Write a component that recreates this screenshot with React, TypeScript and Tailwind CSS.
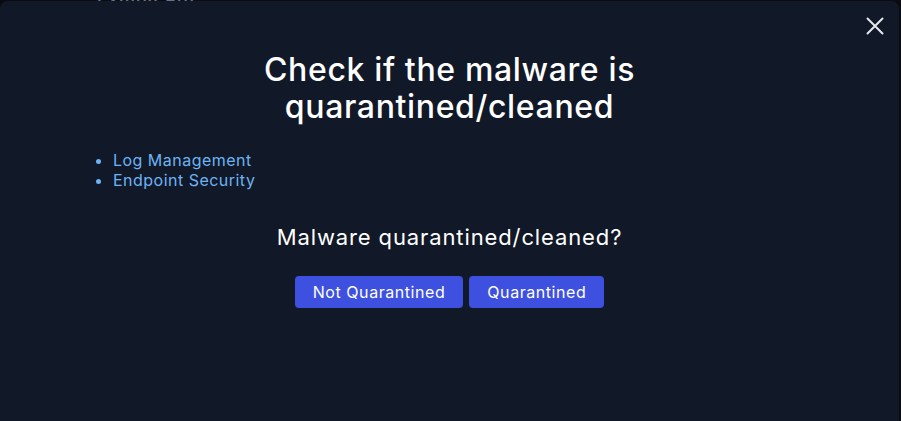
import React from "react";

const App: React.FC = () => {
  const links = ["Log Management", "Endpoint Security"];

  return (
    <div
      className="relative h-[421px] w-[901px] overflow-hidden bg-[#0a0c12]"
      style={{ fontFamily: "Inter, 'Noto Sans', sans-serif" }}
    >
      {/* page behind the overlay, mostly hidden */}
      <div className="absolute left-[97px] top-[-12px] text-[17px] font-semibold tracking-[0.06em] text-gray-500">
        Exhibit Pdf
      </div>

      {/* Modal */}
      <div className="relative mt-px h-[440px] w-[899px] rounded-lg bg-[#111827] px-6 pt-[50px]">
        <button className="absolute right-[15px] top-[16px] text-gray-200">
          <svg width="18" height="18" viewBox="0 0 18 18" fill="none" stroke="currentColor" strokeWidth="2" strokeLinecap="round">
            <path d="M1.5 1.5 L16.5 16.5 M16.5 1.5 L1.5 16.5" />
          </svg>
        </button>

        <h2 className="mx-auto max-w-[460px] text-center text-[32px] leading-[37px] font-medium tracking-[0.02em] text-white">
          Check if the malware is quarantined/cleaned
        </h2>

        <ul className="mt-[25px] ml-[73px] list-disc pl-4 text-[16px] leading-5 tracking-[0.03em] text-[#6cb4f5]">
          {links.map((l) => (
            <li key={l}>
              <a href="#" className="hover:underline">
                {l}
              </a>
            </li>
          ))}
        </ul>

        <p className="mt-[33px] text-center text-[22px] leading-7 tracking-[0.04em] text-white">
          Malware quarantined/cleaned?
        </p>

        <div className="mt-[25px] flex justify-center gap-1.5">
          <button className="rounded bg-[#3d50e0] px-[18px] py-1.5 text-[16px] leading-5 tracking-[0.035em] text-white">
            Not Quarantined
          </button>
          <button className="rounded bg-[#3d50e0] px-[18px] py-1.5 text-[16px] leading-5 tracking-[0.035em] text-white">
            Quarantined
          </button>
        </div>
      </div>
    </div>
  );
};

export default App;
